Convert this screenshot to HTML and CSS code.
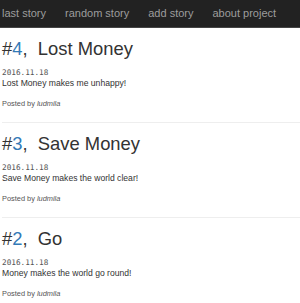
FILE: index.html
```html
<!DOCTYPE html>
<html lang="en">
<head>
<meta charset="utf-8">
<title>Stories</title>
<link rel="stylesheet" href="styles.css">
</head>
<body>
<nav class="navbar">
  <a class="nav-link" href="#">last story</a>
  <a class="nav-link" href="#">random story</a>
  <a class="nav-link" href="#">add story</a>
  <a class="nav-link" href="#">about project</a>
</nav>
<main class="stories">
  <article class="story">
    <h2 class="story-title">#<a class="story-num" href="#">4</a>,&nbsp; Lost Money</h2>
    <div class="story-date">2016.11.18</div>
    <p class="story-text">Lost Money makes me unhappy!</p>
    <p class="story-meta">Posted by <em>ludmila</em></p>
  </article>
  <article class="story">
    <h2 class="story-title">#<a class="story-num" href="#">3</a>,&nbsp; Save Money</h2>
    <div class="story-date">2016.11.18</div>
    <p class="story-text">Save Money makes the world clear!</p>
    <p class="story-meta">Posted by <em>ludmila</em></p>
  </article>
  <article class="story">
    <h2 class="story-title">#<a class="story-num" href="#">2</a>,&nbsp; Go</h2>
    <div class="story-date">2016.11.18</div>
    <p class="story-text">Money makes the world go round!</p>
    <p class="story-meta">Posted by <em>ludmila</em></p>
  </article>
</main>
</body>
</html>
```
FILE: styles.css
```css
html, body {
  margin: 0;
  padding: 0;
  background: #fff;
  font-family: "Liberation Sans", Arial, sans-serif;
  color: #333;
}

.navbar {
  display: flex;
  gap: 19px;
  height: 27px;
  padding-left: 2px;
  background: #222;
  border-bottom: 1px solid #454545;
}

.nav-link {
  font-size: 11px;
  line-height: 27px;
  color: #9d9d9d;
  text-decoration: none;
  white-space: nowrap;
}

.stories {
  padding-left: 2px;
}

.story {
  padding-top: 10px;
  padding-bottom: 13px;
  border-bottom: 1px solid #eee;
}

.story:last-child {
  border-bottom: none;
}

.story-title {
  margin: 0;
  font-size: 18.4px;
  line-height: 22px;
  font-weight: normal;
  color: #333;
}

.story-num {
  color: #337ab7;
  text-decoration: none;
}

.story-date {
  margin-top: 8px;
  font-family: "DejaVu Sans Mono", monospace;
  font-size: 7.7px;
  line-height: 10px;
  color: #555;
}

.story-text {
  margin: 0;
  font-size: 8.6px;
  line-height: 11px;
  color: #333;
}

.story-meta {
  margin: 10px 0 0;
  font-size: 7.4px;
  line-height: 10px;
  color: #555;
}
```
